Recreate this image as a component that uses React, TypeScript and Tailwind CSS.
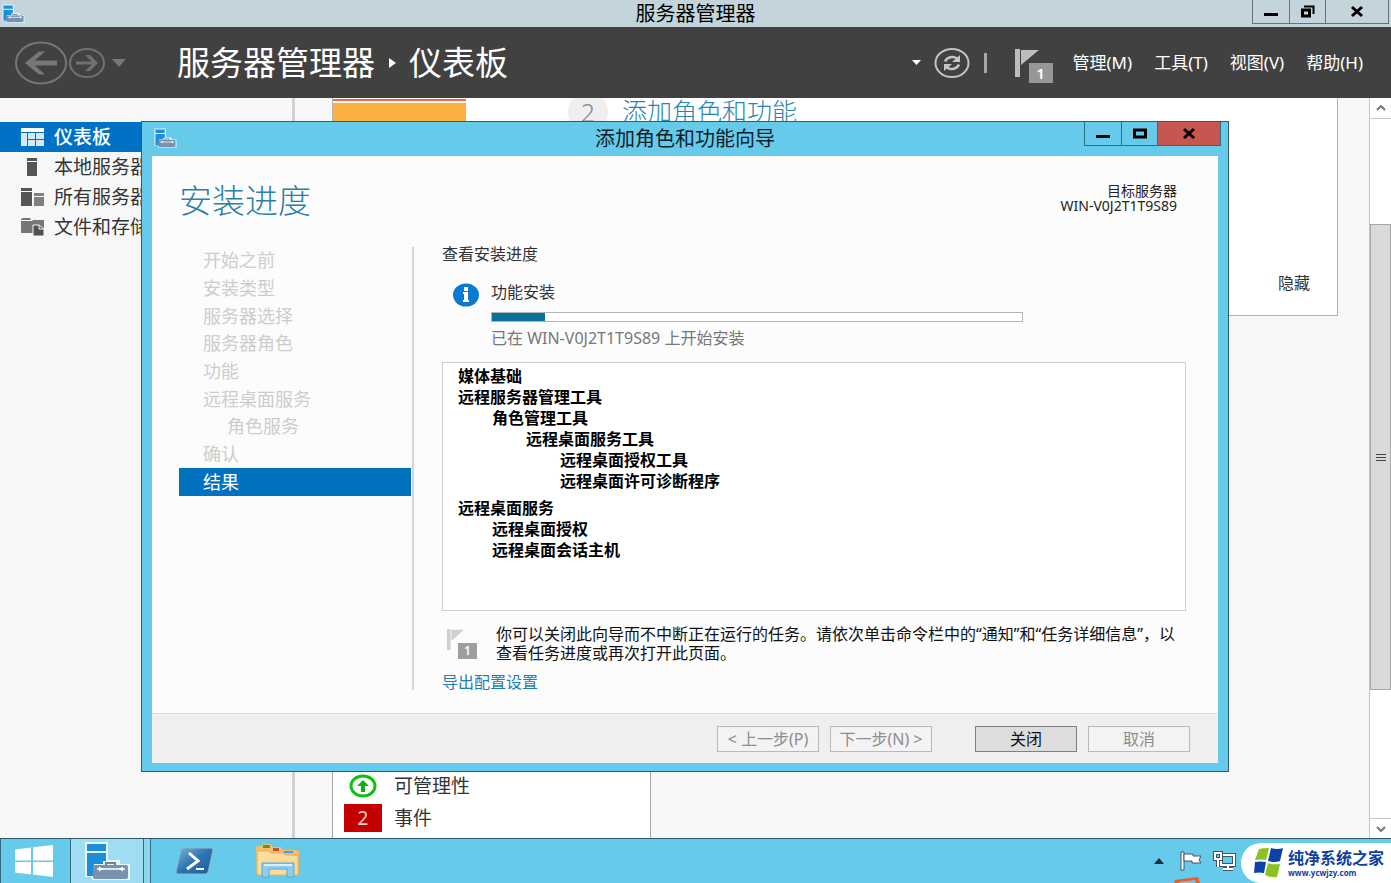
import { clsx } from 'clsx'

const views = [
  { label: '仪表板', icon: DashboardIcon, active: true },
  { label: '本地服务器', icon: LocalServerIcon },
  { label: '所有服务器', icon: AllServersIcon },
  { label: '文件和存储服务', icon: StorageIcon },
]

const menus = ['管理(M)', '工具(T)', '视图(V)', '帮助(H)']

const steps = [
  { label: '开始之前' },
  { label: '安装类型' },
  { label: '服务器选择' },
  { label: '服务器角色' },
  { label: '功能' },
  { label: '远程桌面服务' },
  { label: '角色服务', nested: true },
  { label: '确认' },
  { label: '结果', active: true },
]

const results = [
  [
    { label: '媒体基础', level: 0 },
    { label: '远程服务器管理工具', level: 0 },
    { label: '角色管理工具', level: 1 },
    { label: '远程桌面服务工具', level: 2 },
    { label: '远程桌面授权工具', level: 3 },
    { label: '远程桌面许可诊断程序', level: 3 },
  ],
  [
    { label: '远程桌面服务', level: 0 },
    { label: '远程桌面授权', level: 1 },
    { label: '远程桌面会话主机', level: 1 },
  ],
]

const indents = ['pl-0', 'pl-[34px]', 'pl-[68px]', 'pl-[102px]']

const progress = 10

function ServerManagerIcon({ className }: { className: string }) {
  return (
    <svg viewBox="0 0 47 40" preserveAspectRatio="none" className={className} aria-hidden="true">
      <path d="M1 1h23v18h12v4h10v16H8v-3H1z" fill="#e9f5fb" />
      <path d="M3 3h19v7H3zM3 12h19v8h-3v3h-9v12H3z" fill="#1b8fdc" />
      <path d="M22 24v-2h9v2" fill="none" stroke="#75808f" strokeWidth="2" />
      <rect x="9" y="24" width="35" height="14" rx="2" fill="#7692ad" />
      <path d="M13 28h28" stroke="#fff" strokeWidth="1.500" />
      <path d="M15 25.500l4 2.500-4 2.500zM39 25.500l-4 2.500 4 2.500z" fill="#fff" />
    </svg>
  )
}

function DashboardIcon() {
  return (
    <svg width="23" height="18" viewBox="0 0 23 18" aria-hidden="true">
      <path d="M0 0h23v4H0z" fill="#fff" />
      <path d="M0 5h6v13H0zM7 5h7v6H7zM15 5h8v6h-8zM7 12h7v6H7zM15 12h8v6h-8z" fill="#d5e9f6" />
    </svg>
  )
}

function LocalServerIcon() {
  return (
    <svg width="23" height="18" viewBox="0 0 23 18" aria-hidden="true">
      <path d="M6 0h10v3H6zM6 4h10v14H6z" fill="#555" />
    </svg>
  )
}

function AllServersIcon() {
  return (
    <svg width="23" height="18" viewBox="0 0 23 18" aria-hidden="true">
      <path d="M0 0h11v3H0zM0 4h11v14H0z" fill="#555" />
      <path d="M13 5h10v3H13zM13 9h10v9H13z" fill="#808080" />
    </svg>
  )
}

function StorageIcon() {
  return (
    <svg width="23" height="18" viewBox="0 0 23 18" aria-hidden="true">
      <path d="M0 1l2-1h7l1 2H0zM0 3h11v12H0zM12 2h11v3H12v10h-1V3z" fill="#777" />
      <path d="M11 4h12v8H11z" fill="#777" />
      <path d="M12 7h6l5 4v7H12z" fill="#505050" stroke="#f7f7f7" />
      <path d="M18 7v4h5" fill="none" stroke="#f7f7f7" />
    </svg>
  )
}

function FlagIcon({ className }: { className: string }) {
  return (
    <svg viewBox="0 0 24 28" preserveAspectRatio="none" className={className} aria-hidden="true">
      <path d="M0 0h5v28H0zM6 1h18L6 16z" fill="currentColor" />
    </svg>
  )
}

function Glyph({ kind }: { kind: 'min' | 'max' | 'restore' | 'close' }) {
  return (
    <svg width="16" height="14" viewBox="0 0 16 14" fill="none" stroke="#000" aria-hidden="true">
      {kind === 'min' && <path d="M1 9.500h14" strokeWidth="3" />}
      {kind === 'max' && <path d="M2.500 3h11v7h-11z" strokeWidth="3" />}
      {kind === 'restore' && (
        <>
          <path d="M2.500 5h7v6h-7z" strokeWidth="3" />
          <path d="M4 1.500h9.500V9" strokeWidth="2" />
        </>
      )}
      {kind === 'close' && <path d="M3 2l10 9M13 2L3 11" strokeWidth="3" />}
    </svg>
  )
}

function WindowButtons({ dialog = false }: { dialog?: boolean }) {
  const border = dialog ? 'border-[#2c6f88]' : 'border-[#5c7480]'
  return (
    <div className={clsx('flex h-6 border-x border-b', border, dialog ? 'mr-[7px]' : 'mr-[2px]')}>
      <button aria-label="最小化" className={clsx('flex w-[37px] items-center justify-center border-r', border)}>
        <Glyph kind="min" />
      </button>
      <button aria-label="最大化" className={clsx('flex w-[36px] items-center justify-center border-r', border)}>
        <Glyph kind={dialog ? 'max' : 'restore'} />
      </button>
      <button
        aria-label="关闭窗口"
        className={clsx('flex w-[62px] items-center justify-center', dialog && 'bg-[#c75650]')}
      >
        <Glyph kind="close" />
      </button>
    </div>
  )
}

function TitleBar() {
  return (
    <header className="grid h-[27px] grid-cols-[1fr_auto_1fr] items-start bg-[#c3d5db]">
      <ServerManagerIcon className="mt-1 ml-[2px] h-[19px] w-[23px]" />
      <h1 className="text-[20px] leading-[27px] text-black">服务器管理器</h1>
      <div className="flex justify-end">
        <WindowButtons />
      </div>
    </header>
  )
}

function Toolbar() {
  return (
    <div className="flex h-[71px] items-center bg-[#414141] pr-7 pl-[14px] text-white">
      <button aria-label="后退">
        <svg width="54" height="44" viewBox="0 0 54 44" fill="none" stroke="#777" aria-hidden="true">
          <ellipse cx="27" cy="22" rx="25" ry="20.500" strokeWidth="2" />
          <path d="M43 22H15" strokeWidth="5" />
          <path d="M31 10.500h-6L11 22l14 11.500h6L18 22z" fill="#777" stroke="none" />
        </svg>
      </button>
      <button aria-label="前进">
        <svg width="38" height="32" viewBox="0 0 38 32" fill="none" stroke="#717171" aria-hidden="true">
          <ellipse cx="19" cy="16" rx="17" ry="14" strokeWidth="2" />
          <path d="M8 16h18" strokeWidth="3" />
          <path d="M17 8h5l8 8-8 8h-5l8-8z" fill="#717171" stroke="none" />
        </svg>
      </button>
      <button aria-label="历史记录" className="pl-[6px]">
        <svg width="14" height="8" viewBox="0 0 14 8" aria-hidden="true">
          <path d="M0 0h14L7 8z" fill="#777" />
        </svg>
      </button>
      <nav className="ml-[51px] flex items-center text-[33px] leading-[44px]" aria-label="路径">
        <span>服务器管理器</span>
        <svg width="8" height="10" viewBox="0 0 8 10" className="mx-[13px]" aria-hidden="true">
          <path d="M1 0l7 5-7 5z" fill="#fff" />
        </svg>
        <span>仪表板</span>
      </nav>
      <div className="ml-auto flex items-center">
        <svg width="9" height="5" viewBox="0 0 9 5" aria-hidden="true">
          <path d="M0 0h9L4.500 5z" fill="#fff" />
        </svg>
        <button aria-label="刷新" className="ml-[13px]">
          <svg width="36" height="32" viewBox="0 0 36 32" fill="none" stroke="#c4c4c4" aria-hidden="true">
            <ellipse cx="18" cy="16" rx="16.500" ry="14" strokeWidth="2" />
            <path d="M11 14.500c2-4.500 8-6 12-3M25 17.500c-2 4.500-8 6-12 3" strokeWidth="2.500" />
            <path d="M26 8v7h-8zM10 24v-7h8z" fill="#c4c4c4" stroke="none" />
          </svg>
        </button>
        <div className="mx-[14px] h-5 w-[3px] bg-[#a8a8a8]" />
        <button aria-label="通知" className="relative ml-[14px] h-10 w-[38px]">
          <FlagIcon className="h-7 w-6 text-[#bdbdbd]" />
          <span className="absolute right-0 bottom-0 h-5 w-6 bg-[#979797] text-center text-[15px] leading-5 font-semibold">
            1
          </span>
        </button>
        <div className="ml-5 flex gap-[22px] text-[17px]">
          {menus.map((menu) => (
            <button key={menu}>{menu}</button>
          ))}
        </div>
      </div>
    </div>
  )
}

function Sidebar() {
  return (
    <aside className="w-[295px] shrink-0 border-r-[3px] border-[#d2d2d2] pt-6">
      {views.map(({ label, icon: Icon, active }) => (
        <a
          key={label}
          href="#"
          className={clsx(
            'flex h-[30px] items-center gap-[10px] pl-[21px] text-[19px]',
            active ? 'bg-[#0072c6] font-medium text-white' : 'text-[#333]',
          )}
        >
          <Icon />
          {label}
        </a>
      ))}
    </aside>
  )
}

function Dashboard() {
  return (
    <main className="flex min-w-0 flex-1 flex-col pr-[31px] pl-[37px]">
      <section className="flex h-[218px] border border-t-0 border-[#b0b0b0] bg-white">
        <div className="mt-px flex w-[133px] flex-col gap-[2px]">
          <div className="h-[2px] bg-[#f26a3d]" />
          <div className="flex-1 bg-[#fbb040]" />
        </div>
        <a href="#" className="-mt-[6px] ml-[102px] flex h-10 items-center gap-[14px] text-[25px] font-light text-[#2a84b0]">
          <span className="h-10 w-10 rounded-full bg-[#efefef] text-center leading-10 text-[#888]">2</span>
          添加角色和功能
        </a>
        <button className="mt-auto mr-[27px] mb-5 ml-auto text-[16px] text-[#333]">隐藏</button>
      </section>
      <section className="mt-auto w-[319px] border border-b-0 border-[#a8a8a8] bg-white pt-20 pb-1 text-[19px] text-[#333]">
        <div className="flex h-8 items-center gap-3 pl-[11px]">
          <span className="flex w-[38px] justify-center">
            <svg width="28" height="24" viewBox="0 0 28 24" aria-hidden="true">
              <ellipse cx="14" cy="12" rx="12" ry="10" fill="#fff" stroke="#10c010" strokeWidth="3" />
              <path d="M14 6l6 6h-4v6h-4v-6H8z" fill="#10b010" />
            </svg>
          </span>
          可管理性
        </div>
        <div className="flex h-8 items-center gap-3 pl-[11px]">
          <span className="h-7 w-[38px] bg-[#c40000] text-center leading-7 text-[#f3d9c0]">2</span>
          事件
        </div>
      </section>
    </main>
  )
}

function Scrollbar() {
  return (
    <div className="flex w-[22px] shrink-0 flex-col border-l border-[#c6c6c6] bg-white" aria-hidden="true">
      <div className="flex h-[21px] items-center justify-center border-b border-[#c6c6c6]">
        <svg width="10" height="6" viewBox="0 0 10 6" fill="none" stroke="#777" strokeWidth="2">
          <path d="M1 5l4-4 4 4" />
        </svg>
      </div>
      <div className="flex-[105]" />
      <div className="flex flex-[466] flex-col items-center justify-center gap-[2px] border border-[#a8a8a8] bg-[#dadada]">
        <div className="h-px w-[10px] bg-[#444]" />
        <div className="h-px w-[10px] bg-[#444]" />
        <div className="h-px w-[10px] bg-[#444]" />
      </div>
      <div className="flex-[128]" />
      <div className="flex h-5 items-center justify-center border-t border-[#c6c6c6]">
        <svg width="10" height="6" viewBox="0 0 10 6" fill="none" stroke="#777" strokeWidth="2">
          <path d="M1 1l4 4 4-4" />
        </svg>
      </div>
    </div>
  )
}

function StepList() {
  return (
    <nav className="mt-[2px] h-[443px] w-[235px] shrink-0 border-r-2 border-[#d4d4d4] pr-px" aria-label="步骤">
      <ol className="grid h-[249px] auto-rows-fr text-[18px]">
        {steps.map((step) => (
          <li
            key={step.label}
            aria-current={step.active ? 'step' : undefined}
            className={clsx(
              'flex items-center',
              step.nested ? 'pl-12' : 'pl-6',
              step.active ? 'bg-[#0072c0] text-white' : 'text-[#cdcdcd]',
            )}
          >
            {step.label}
          </li>
        ))}
      </ol>
    </nav>
  )
}

function Results() {
  return (
    <div className="mr-[4px] flex h-[249px] flex-col gap-[6px] border border-[#cfcfcf] bg-white px-[15px] py-[3px] text-[16px] leading-[21px] font-bold text-black">
      {results.map((group) => (
        <ul key={group[0].label}>
          {group.map((item) => (
            <li key={item.label} className={indents[item.level]}>
              {item.label}
            </li>
          ))}
        </ul>
      ))}
    </div>
  )
}

function WizardDialog() {
  return (
    <div
      role="dialog"
      aria-labelledby="wizard-title"
      className="absolute top-[23px] right-[162px] bottom-[66px] left-[141px] flex flex-col border border-[#365a68] bg-[#66caea] px-[10px] pb-2"
    >
      <header className="-mx-[10px] grid h-[34px] grid-cols-[1fr_auto_1fr] items-start">
        <ServerManagerIcon className="mt-[6px] ml-3 h-5 w-[23px]" />
        <h2 id="wizard-title" className="text-[20px] leading-[34px] text-[#10202a]">
          添加角色和功能向导
        </h2>
        <div className="flex justify-end">
          <WindowButtons dialog />
        </div>
      </header>
      <div className="flex min-h-0 flex-1 flex-col bg-[#fcfcfc]">
        <div className="flex h-[89px] items-start justify-between pr-[41px] pl-[27px]">
          <h3 className="pt-6 text-[33px] leading-[42px] font-light text-[#2b7fa3]">安装进度</h3>
          <p className="pt-[27px] text-right text-[14px] leading-[15px] text-[#222]">
            目标服务器
            <br />
            WIN-V0J2T1T9S89
          </p>
        </div>
        <div className="flex flex-1 pr-7 pl-[27px]">
          <StepList />
          <div className="min-w-0 flex-1 pl-7 text-[16px] leading-[18px] text-[#333]">
            <p>查看安装进度</p>
            <div className="mt-5 flex h-[79px] items-start pl-[11px]">
              <svg width="26" height="24" viewBox="0 0 26 24" aria-hidden="true">
                <ellipse cx="13" cy="12" rx="13" ry="11.500" fill="#0a7bd0" />
                <path d="M11 4h4v4h-4zM10 9h5v8h1v2h-6v-2h1v-6h-1z" fill="#fff" />
              </svg>
              <div className="mr-[167px] ml-3 flex-1">
                <p id="install-label">功能安装</p>
                <div
                  role="progressbar"
                  aria-labelledby="install-label"
                  aria-valuenow={progress}
                  className="mt-[11px] h-[10px] border border-[#b4b4b4] bg-white"
                >
                  <div className="h-full bg-[#0a7299]" style={{ width: `${progress}%` }} />
                </div>
                <p className="mt-[7px] text-[#777]">已在 WIN-V0J2T1T9S89 上开始安装</p>
              </div>
            </div>
            <Results />
            <div className="mt-[14px] flex text-[#111]">
              <div className="relative mt-1 ml-[5px] h-[30px] w-[30px] shrink-0" aria-hidden="true">
                <FlagIcon className="h-[21px] w-[17px] text-[#cfcfcf]" />
                <span className="absolute right-0 bottom-0 h-4 w-[19px] bg-[#9e9e9e] text-center text-[12px] leading-4 font-semibold text-white">
                  1
                </span>
              </div>
              <p className="ml-[19px] leading-[19px] whitespace-nowrap">
                你可以关闭此向导而不中断正在运行的任务。请依次单击命令栏中的“通知”和“任务详细信息”，以
                <br />
                查看任务进度或再次打开此页面。
              </p>
            </div>
            <a href="#" className="mt-[10px] inline-block text-[#1f7fae]">
              导出配置设置
            </a>
          </div>
        </div>
        <footer className="flex h-[50px] items-start gap-[11px] border-t border-[#dcdcdc] bg-[#efefef] pt-3 pr-7 text-[16px] leading-6">
          <button disabled className="ml-auto w-[102px] border border-[#b9b9b9] bg-[#f3f3f3] text-[#8c8c8c]">
            &lt; 上一步(P)
          </button>
          <button disabled className="w-[102px] border border-[#b9b9b9] bg-[#f3f3f3] text-[#8c8c8c]">
            下一步(N) &gt;
          </button>
          <button className="ml-8 w-[102px] border border-[#808080] bg-[#dddddd] text-[#111]">关闭</button>
          <button disabled className="w-[102px] border border-[#b9b9b9] bg-[#f3f3f3] text-[#8c8c8c]">
            取消
          </button>
        </footer>
      </div>
    </div>
  )
}

function SiteLogo() {
  return (
    <div className="flex h-10 w-[150px] items-center gap-1 self-end rounded-l-full bg-white pl-[13px]">
      <svg width="30" height="30" viewBox="0 0 30 30" className="shrink-0" aria-hidden="true">
        <path d="M5 1q4-1 10-1l-3 12q-5-1-11 0z" fill="#8cc220" />
        <path d="M17 0q6 2 12 0l-3 13q-5 2-12 0z" fill="#0f42a8" />
        <path d="M1 14q5-1 11 0l-2 11q-5-1-10 0z" fill="#0f42a8" />
        <path d="M14 15q5 2 12 1l-3 13q-6 1-12-2z" fill="#8cc220" />
      </svg>
      <p className="whitespace-nowrap text-[#0f3f9f]">
        <span className="block text-[16px] leading-[20px] font-bold">纯净系统之家</span>
        <span className="block font-['Open_Sans'] text-[8px] leading-[10px] font-bold">www.ycwjzy.com</span>
      </p>
    </div>
  )
}

function Taskbar() {
  return (
    <footer className="flex h-[45px] items-stretch border-t border-[#2f5a6b] bg-[#66caea]">
      <button aria-label="开始" className="flex w-[71px] items-center justify-center border-x border-[#37697d] pr-[4px]">
        <svg width="38" height="32" viewBox="0 0 38 32" aria-hidden="true">
          <path d="M0 4.500L16 2.500v13H0zM18 2.200L38 0v15.500H18zM0 17h16v12.500L0 27.500zM18 17h20v15l-20-2.500z" fill="#fff" />
        </svg>
      </button>
      <button
        aria-label="服务器管理器"
        className="flex w-[73px] items-center justify-center border-r border-[#37697d] bg-[#a0dcf2]"
      >
        <ServerManagerIcon className="h-10 w-[47px]" />
      </button>
      <div className="w-[7px] border-r border-[#37697d] bg-[#8dd6ef]" />
      <button aria-label="PowerShell" className="ml-6 flex items-center">
        <svg width="40" height="28" viewBox="0 0 40 28" aria-hidden="true">
          <defs>
            <linearGradient id="ps" x1="0" y1="0" x2="1" y2="1">
              <stop offset="0" stopColor="#7db4dc" />
              <stop offset="0.5" stopColor="#2c74b0" />
              <stop offset="1" stopColor="#1f5c98" />
            </linearGradient>
          </defs>
          <path d="M9 1h27q2 0 2 2l-5 22q-1 2-3 2H3q-2 0-2-2L6 3q1-2 3-2z" fill="url(#ps)" stroke="#8fb6cf" />
          <path d="M14 6l9 8-11 8" fill="none" stroke="#fff" strokeWidth="3" />
          <path d="M21 22h8" stroke="#fff" strokeWidth="2" />
        </svg>
      </button>
      <button aria-label="文件资源管理器" className="ml-10 flex items-center">
        <svg width="46" height="36" viewBox="0 0 46 36" aria-hidden="true">
          <path d="M1 5q0-2 2-2h3l2-2h8l2 3h8l2 3h14q2 0 2 2v23H2z" fill="#f3bd6b" />
          <path d="M8 2h7v3H8z" fill="#43a047" />
          <path d="M18 5h6v3h-6z" fill="#c8502e" />
          <path d="M29 8h9v2h-9z" fill="#4a9be0" />
          <path d="M2 8h12l2 2h12l2 2h13v20H2z" fill="#fbdc9c" stroke="#e8ae5c" />
          <path d="M7 20h32v14h-7v-8H14v8H7z" fill="#8fcdee" stroke="#5ba6d0" />
          <path d="M9 22h28" stroke="#d8f0fb" strokeWidth="2" />
        </svg>
      </button>
      <div className="ml-auto flex items-center">
        <svg width="10" height="6" viewBox="0 0 10 6" className="mr-4" aria-hidden="true">
          <path d="M0 6l5-6 5 6z" fill="#14303c" />
        </svg>
        <div className="relative mr-[11px] flex h-full items-center">
          <svg width="22" height="20" viewBox="0 0 22 20" aria-hidden="true">
            <path d="M1 1h3v18H1z" fill="#fff" stroke="#456" />
            <path d="M4 3h9v2h8l-2 4 2 3h-9v-2H4z" fill="#fff" stroke="#456" />
          </svg>
          <svg width="28" height="6" viewBox="0 0 28 6" className="absolute bottom-0 -left-[7px]" aria-hidden="true">
            <path d="M1 6l1-3L25 0l2 6h-4l-1-3L6 5v1z" fill="#f15a24" />
          </svg>
        </div>
        <svg width="23" height="20" viewBox="0 0 23 20" fill="none" stroke="#fff" className="mr-[5px]" aria-hidden="true">
          <path d="M9 4h12v10H8v-4M15 14v4M10 18h10" stroke="#456" strokeWidth="4" />
          <path d="M9 4h12v10H8v-4M15 14v4M10 18h10" strokeWidth="2" />
          <path d="M2 2h6v6H2zM5 8v8" stroke="#456" strokeWidth="4" />
          <path d="M2 2h6v6H2zM5 8v8" strokeWidth="2" />
        </svg>
        <SiteLogo />
      </div>
    </footer>
  )
}

export default function App() {
  return (
    <div className="flex h-screen flex-col overflow-hidden bg-[#f7f7f7] font-['Noto_Sans','Noto_Sans_CJK_SC',sans-serif]">
      <TitleBar />
      <Toolbar />
      <div className="relative flex min-h-0 flex-1">
        <div className="flex min-w-0 flex-1 overflow-hidden">
          <Sidebar />
          <Dashboard />
        </div>
        <Scrollbar />
        <WizardDialog />
      </div>
      <Taskbar />
    </div>
  )
}
